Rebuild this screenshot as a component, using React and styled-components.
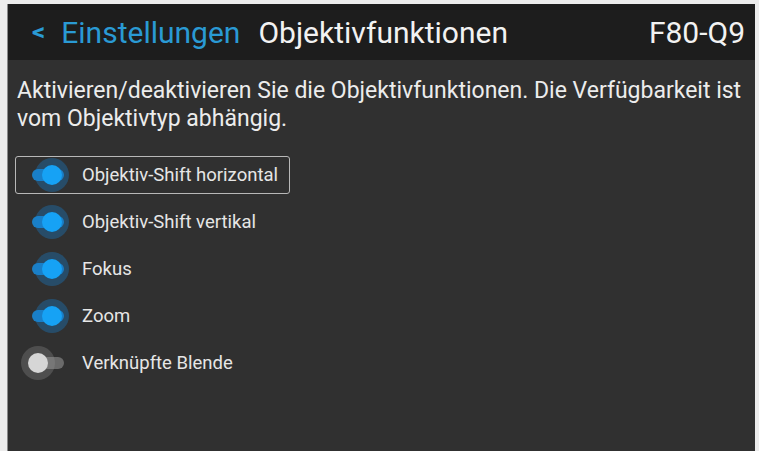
import React, { useState } from "react";
import styled, { createGlobalStyle } from "styled-components";

const Global = createGlobalStyle`
  html, body {
    margin: 0;
    padding: 0;
    background: #ececec;
    font-family: Roboto, "Noto Sans", sans-serif;
  }
`;

const Frame = styled.div`
  padding: 4px 4px 0 7px;
  height: 451px;
  box-sizing: border-box;
`;

const Screen = styled.div`
  height: 100%;
  display: flex;
  flex-direction: column;
  background: #303030;
  border-left: 1px solid #8a8a8a;
`;

const Header = styled.div`
  height: 56px;
  display: flex;
  align-items: center;
  padding: 0 10px 0 24px;
  background: #1d1d1d;
  font-size: 30px;
  color: #f2f2f2;
`;

const Back = styled.span`
  color: #2a9ad4;
  font-size: 26px;
  margin-right: 16px;
  font-weight: 700;
  transform: scaleY(0.9);
`;

const Crumb = styled.span`
  color: #2a9ad4;
  margin-right: 18px;
`;

const Model = styled.span`
  margin-left: auto;
`;

const Intro = styled.p`
  margin: 17px 0 23px 9px;
  font-size: 23px;
  line-height: 28px;
  color: #ececec;
`;

const List = styled.div`
  display: flex;
  flex-direction: column;
  gap: 9px;
  padding-left: 7px;
`;

const Row = styled.div`
  width: 275px;
  height: 38px;
  box-sizing: border-box;
  display: flex;
  align-items: center;
  padding-left: 14px;
  border: 1px solid ${(p) => (p.$focus ? "#b8b8b8" : "transparent")};
  border-radius: 3px;
  cursor: pointer;
`;

const Switch = styled.span`
  position: relative;
  width: 40px;
  height: 20px;
  margin-right: 12px;
  flex-shrink: 0;

  &::before {
    content: "";
    position: absolute;
    left: 2px;
    top: 4px;
    width: 32px;
    height: 12px;
    border-radius: 6px;
    background: ${(p) => (p.$on ? "#1b7fc4" : "#6a6a6a")};
  }

  &::after {
    content: "";
    position: absolute;
    top: 0;
    left: ${(p) => (p.$on ? "12px" : "-2px")};
    width: 20px;
    height: 20px;
    border-radius: 50%;
    background: ${(p) => (p.$on ? "#16a2f5" : "#d6d6d6")};
    box-shadow: 0 0 0 7px ${(p) => (p.$on ? "rgba(22,130,210,0.35)" : "rgba(150,150,150,0.3)")};
  }
`;

const Label = styled.span`
  font-size: 18.5px;
  color: #e6e6e6;
`;

const items = [
  { name: "Objektiv-Shift horizontal", on: true },
  { name: "Objektiv-Shift vertikal", on: true },
  { name: "Fokus", on: true },
  { name: "Zoom", on: true },
  { name: "Verknüpfte Blende", on: false },
];

export default function App() {
  const [state, setState] = useState(items);
  const toggle = (i) =>
    setState((s) => s.map((it, j) => (j === i ? { ...it, on: !it.on } : it)));

  return (
    <>
      <Global />
      <Frame>
        <Screen>
          <Header>
            <Back>&lt;</Back>
            <Crumb>Einstellungen</Crumb>
            <span>Objektivfunktionen</span>
            <Model>F80-Q9</Model>
          </Header>
          <Intro>
            Aktivieren/deaktivieren Sie die Objektivfunktionen. Die Verfügbarkeit ist
            <br />
            vom Objektivtyp abhängig.
          </Intro>
          <List>
            {state.map((it, i) => (
              <Row key={it.name} $focus={i === 0} onClick={() => toggle(i)}>
                <Switch $on={it.on} />
                <Label>{it.name}</Label>
              </Row>
            ))}
          </List>
        </Screen>
      </Frame>
    </>
  );
}
